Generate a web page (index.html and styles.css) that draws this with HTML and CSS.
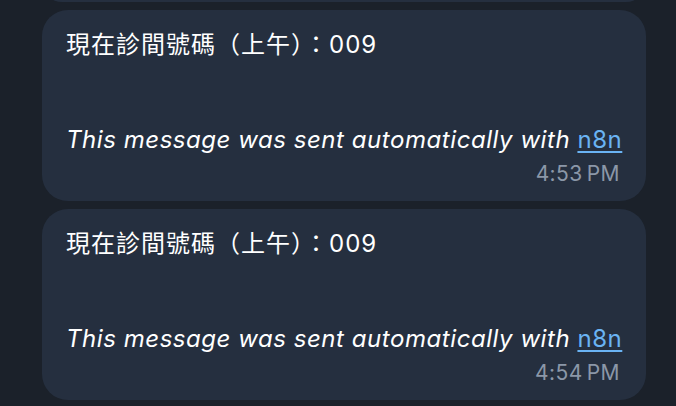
FILE: index.html
```
<!DOCTYPE html>
<html lang="zh-Hant">
<head>
    <meta charset="UTF-8">
    <meta name="viewport" content="width=device-width, initial-scale=1.0">
    <title>Chat</title>
    <link rel="stylesheet" href="styles.css">
</head>
<body>
    <div class="chat">
        <div class="bubble bubble-cut"></div>

        <div class="bubble">
            <p class="line head">現在診間號碼（上午）：009</p>
            <p class="line blank"></p>
            <p class="line blank"></p>
            <p class="line note">This message was sent automatically with <a href="#">n8n</a></p>
            <div class="meta">4:53&#8201;PM</div>
        </div>

        <div class="bubble">
            <p class="line head">現在診間號碼（上午）：009</p>
            <p class="line blank"></p>
            <p class="line blank"></p>
            <p class="line note">This message was sent automatically with <a href="#">n8n</a></p>
            <div class="meta">4:54&#8201;PM</div>
        </div>
    </div>
</body>
</html>
```

FILE: styles.css
```
* {
    margin: 0;
    padding: 0;
    box-sizing: border-box;
}

body {
    background: #1b212a;
    font-family: Inter, "Noto Sans CJK TC", sans-serif;
    color: #ffffff;
    overflow: hidden;
}

.chat {
    display: flex;
    flex-direction: column;
    gap: 8px;
    padding: 0 30px 0 42px;
}

.bubble {
    background: #252f3f;
    border-radius: 26px;
    padding: 19px 22px 15px 24px;
}

.bubble-cut {
    height: 40px;
    margin-top: -38px;
}

.line {
    font-size: 24px;
    letter-spacing: 0.55px;
    line-height: 31.5px;
    min-height: 31.5px;
}

.head {
    letter-spacing: 1px;
}

.note {
    font-style: italic;
}

.note a {
    font-style: normal;
    color: #6ab3f3;
    text-decoration: underline;
    text-underline-offset: 3px;
}

.meta {
    text-align: right;
    font-size: 21px;
    letter-spacing: 0.4px;
    line-height: 24px;
    color: #8b97a8;
    margin-top: 7px;
    padding-right: 4px;
}
```
